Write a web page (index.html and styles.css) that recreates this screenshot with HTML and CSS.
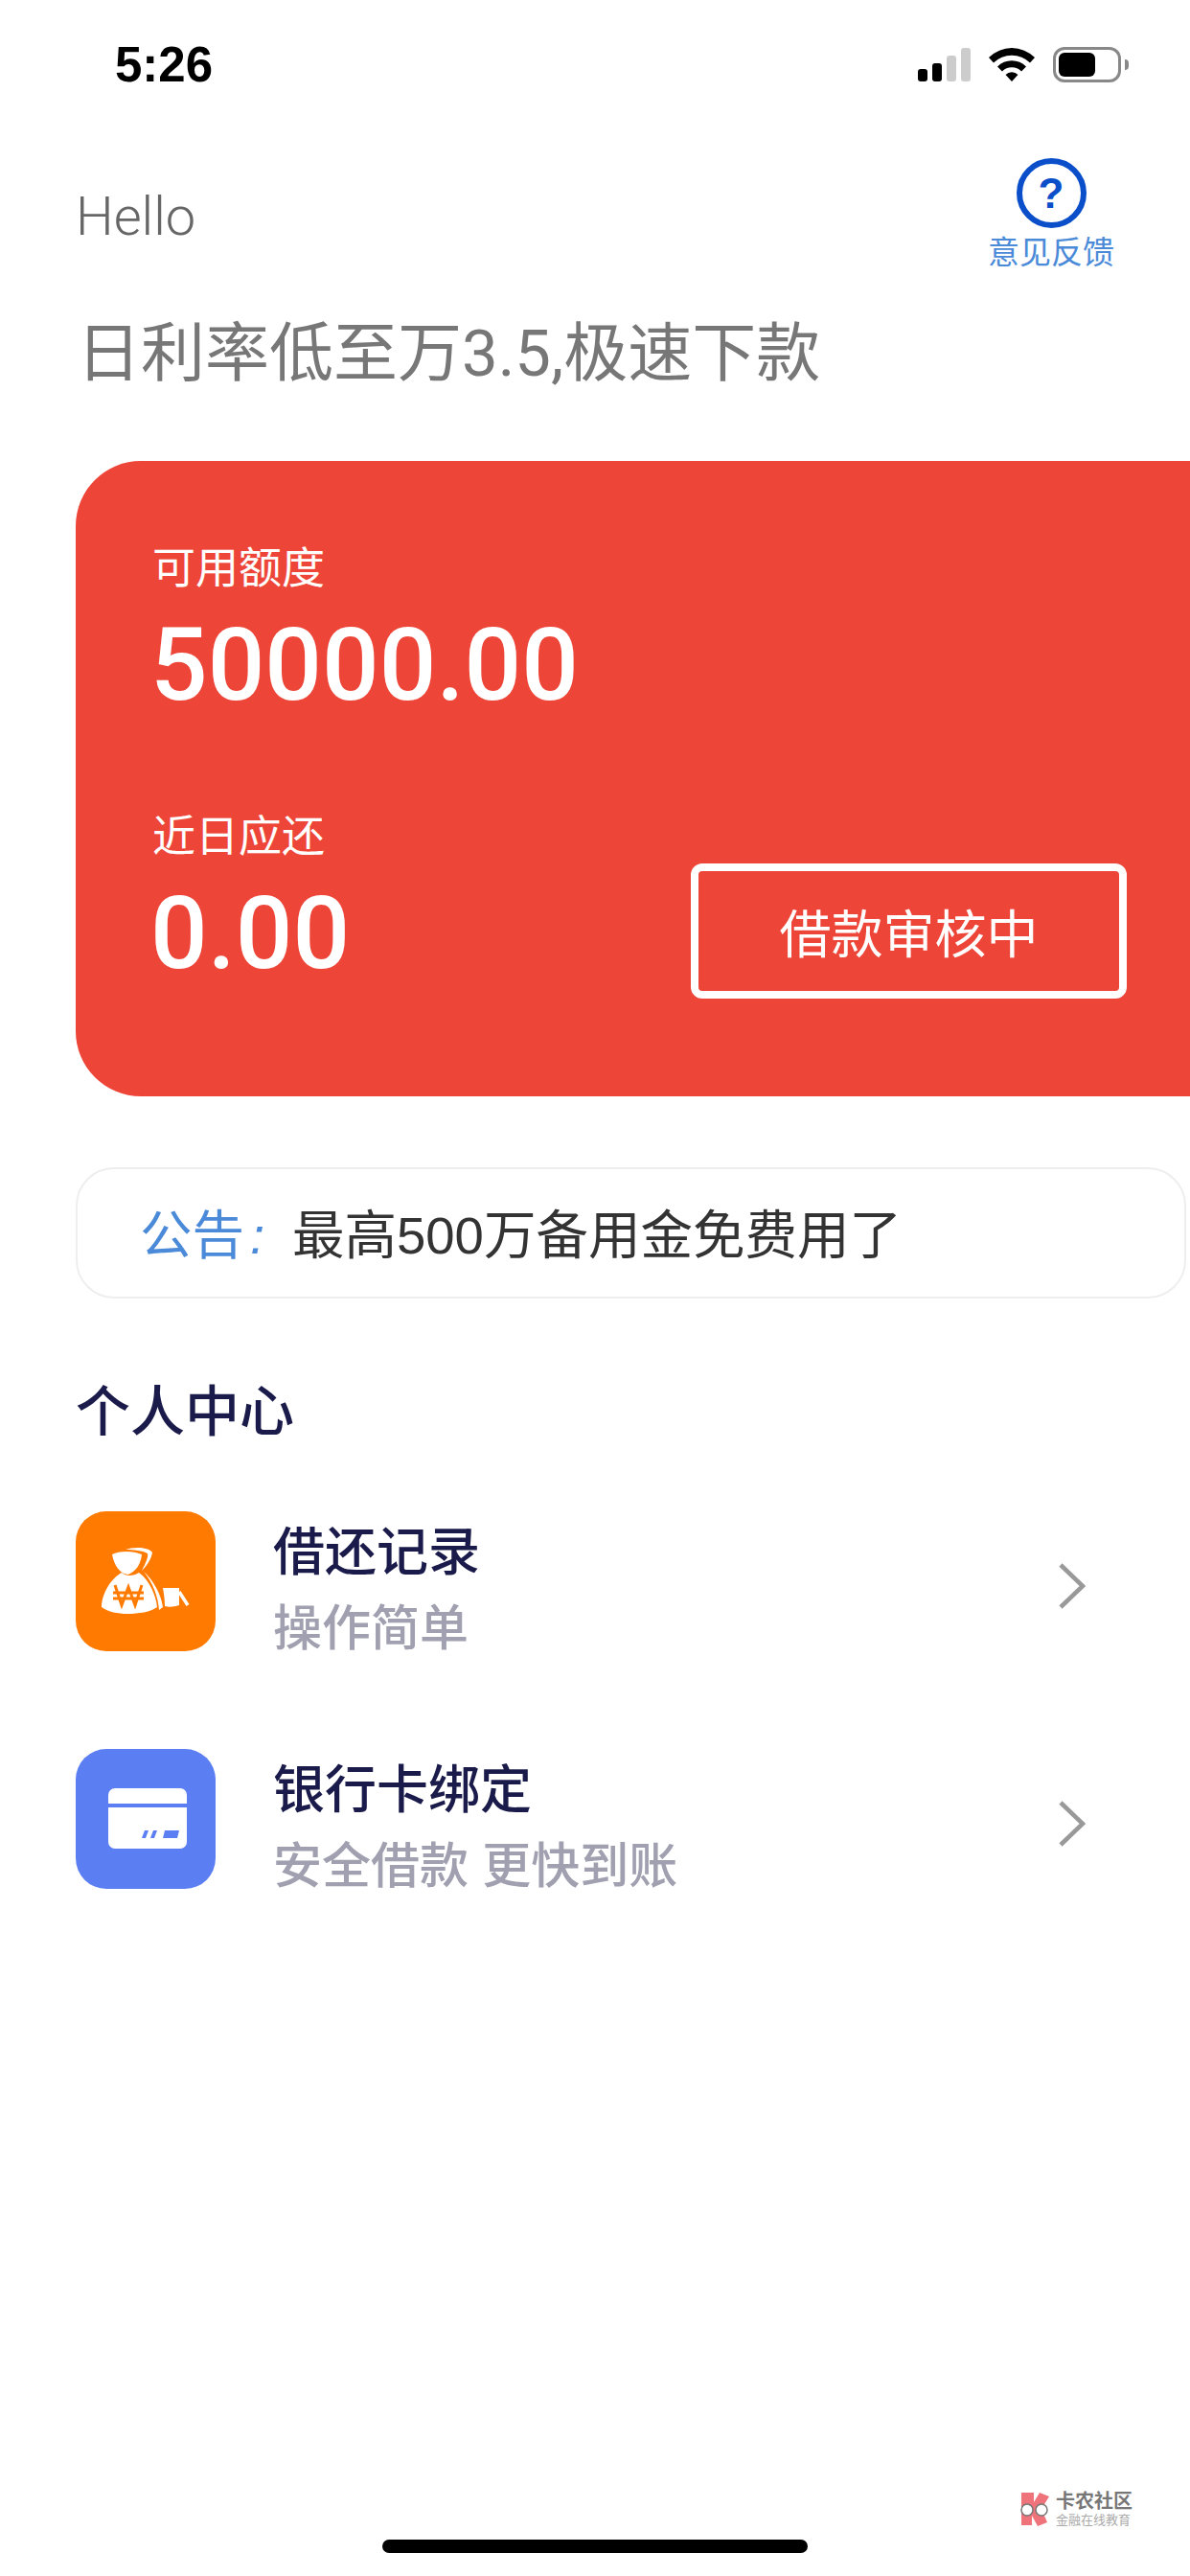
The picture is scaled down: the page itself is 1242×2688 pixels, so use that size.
FILE: index.html
```html
<!DOCTYPE html>
<html>
<head>
    <meta charset="utf-8">
    <link rel="stylesheet" href="styles.css">
</head>
<body>
    <div class="page">
        <div class="status-bar">
            <span class="time">5:26</span>
            <div class="status-icons">
                <svg class="signal" width="55" height="35" viewBox="0 0 55 35">
                    <rect x="0" y="22" width="10" height="13" rx="3" fill="#000"/>
                    <rect x="15" y="16" width="10" height="19" rx="3" fill="#000"/>
                    <rect x="30" y="8" width="10" height="27" rx="3" fill="#ccc"/>
                    <rect x="45" y="0" width="10" height="35" rx="3" fill="#ccc"/>
                </svg>
                <svg class="wifi" width="48" height="36" viewBox="0 0 48 36">
                    <path d="M0 11 A34 34 0 0 1 48 11 L43 16.500 A27 27 0 0 0 5 16.500 Z" fill="#000"/>
                    <path d="M9 20.500 A21 21 0 0 1 39 20.500 L34 25.500 A14 14 0 0 0 14 25.500 Z" fill="#000"/>
                    <path d="M17.500 29 A9 9 0 0 1 30.500 29 L24 36 Z" fill="#000"/>
                </svg>
                <div class="battery">
                    <div class="battery-level"></div>
                </div>
                <div class="battery-nub"></div>
            </div>
        </div>

        <div class="header">
            <span class="hello">Hello</span>
            <div class="feedback">
                <div class="help-icon">?</div>
                <span>意见反馈</span>
            </div>
        </div>

        <h1 class="headline">日利率低至万3.5,极速下款</h1>

        <div class="card">
            <div class="card-label">可用额度</div>
            <div class="card-amount">50000.00</div>
            <div class="card-bottom">
                <div>
                    <div class="card-label">近日应还</div>
                    <div class="card-amount">0.00</div>
                </div>
                <div class="status-btn">借款审核中</div>
            </div>
        </div>

        <div class="notice">
            <span class="notice-tag">公告<i>:</i></span>
            <span class="notice-text">最高500万备用金免费用了</span>
        </div>

        <h2 class="section-title">个人中心</h2>

        <div class="menu-row">
            <div class="menu-icon orange">
                <svg width="146" height="146" viewBox="0 0 146 146">
                    <path d="M38 45 C45 41 60 41 69 45 C68 54 64 62 55 66 C47 66 40 57 38 45 Z" fill="#fff"/>
                    <path d="M52 40 C60 37 76 37 80 43 C79 50 74 57 69 62 C73 54 76 48 75 44 C70 41 60 40 52 40 Z" fill="#fff"/>
                    <path d="M48 64 C52 68 60 68 66 64 C77 72 84 88 85 100 C78 105 66 107 54 107 C44 107 34 105 27 100 C27 86 37 70 48 64 Z" fill="#fff"/>
                    <path d="M71 63 C81 72 89 86 91 100 L87 103 C86 88 80 74 71 63 Z" fill="#fff"/>
                    <path d="M41 77 L48 98 L55 79 L62 98 L69 77 M39 85 H71 M39 91 H71" fill="none" stroke="#ff7a00" stroke-width="3"/>
                    <path d="M91 80 H108 V98 C102 100 97 100 93 99 C93 92 92 86 91 80 Z" fill="#fff"/>
                    <path d="M108 84 L117 98" fill="none" stroke="#fff" stroke-width="3.500"/>
                </svg>
            </div>
            <div class="menu-text">
                <div class="menu-title">借还记录</div>
                <div class="menu-sub">操作简单</div>
            </div>
            <svg class="chevron" width="30" height="50" viewBox="0 0 30 50">
                <path d="M3 3 L26 25 L3 47" fill="none" stroke="#999" stroke-width="4.500"/>
            </svg>
        </div>

        <div class="menu-row">
            <div class="menu-icon blue">
                <svg width="146" height="146" viewBox="0 0 146 146">
                    <path d="M34 57 V48 A7 7 0 0 1 41 41 H109 A7 7 0 0 1 116 48 V57 Z" fill="#fff"/>
                    <path d="M34 61 H116 V97 A7 7 0 0 1 109 104 H41 A7 7 0 0 1 34 97 Z" fill="#fff"/>
                    <path d="M72 85 H76 L73 93 H69 Z M81 85 H85 L82 93 H78 Z M93 85 H108 L106 93 H91 Z" fill="#5b7ef2"/>
                </svg>
            </div>
            <div class="menu-text">
                <div class="menu-title">银行卡绑定</div>
                <div class="menu-sub">安全借款 更快到账</div>
            </div>
            <svg class="chevron" width="30" height="50" viewBox="0 0 30 50">
                <path d="M3 3 L26 25 L3 47" fill="none" stroke="#999" stroke-width="4.500"/>
            </svg>
        </div>

        <div class="home-bar"></div>

        <div class="watermark">
            <svg width="36" height="36" viewBox="0 0 36 36">
                <path d="M4 1 H17 V11 L23 1 L33 5 L25 18 L31 32 L21 36 L15 25 V35 H4 Z" fill="#ee737b"/>
                <circle cx="10" cy="19" r="6" fill="#fff" stroke="#777" stroke-width="1.500"/>
                <circle cx="25" cy="19" r="6" fill="#fff" stroke="#777" stroke-width="1.500"/>
            </svg>
            <div class="watermark-text">
                <div class="wm-name">卡农社区</div>
                <div class="wm-sub">金融在线教育</div>
            </div>
        </div>
    </div>
</body>
</html>
```

FILE: styles.css
```css
* {
    box-sizing: border-box;
}

body {
    margin: 0;
    background: #fff;
    font-family: "Liberation Sans", "Noto Sans CJK SC", sans-serif;
}

.page {
    position: relative;
    width: 1242px;
    height: 2688px;
    overflow: hidden;
    display: flex;
    flex-direction: column;
    background: #fff;
}

.status-bar {
    height: 134px;
    padding: 0 64px 0 120px;
    display: flex;
    justify-content: space-between;
    align-items: center;
}

.time {
    font-size: 51px;
    font-weight: bold;
    color: #000;
}

.status-icons {
    display: flex;
    align-items: center;
}

.wifi {
    margin-left: 19px;
}

.battery {
    width: 71px;
    height: 37px;
    margin-left: 19px;
    padding: 3px;
    border: 3px solid #888;
    border-radius: 12px;
}

.battery-level {
    width: 38px;
    height: 25px;
    background: #000;
    border-radius: 6px;
}

.battery-nub {
    width: 4px;
    height: 11px;
    margin-left: 4px;
    background: #888;
    border-radius: 0 4px 4px 0;
}

.header {
    height: 124px;
    margin-top: 31px;
    padding: 0 79px;
    display: flex;
    justify-content: space-between;
}

.hello {
    margin-top: 26px;
    font-family: Roboto, "Liberation Sans", sans-serif;
    font-size: 56px;
    font-weight: 300;
    line-height: 70px;
    color: #666;
}

.feedback {
    display: flex;
    flex-direction: column;
    align-items: center;
    font-size: 33px;
    line-height: 44px;
    color: #4a8ad8;
}

.help-icon {
    width: 73px;
    height: 73px;
    margin-bottom: 4px;
    border: 6px solid #0a4fc9;
    border-radius: 50%;
    display: flex;
    justify-content: center;
    align-items: center;
    font-size: 44px;
    font-weight: bold;
    line-height: 1;
    color: #0a4fc9;
}

.headline {
    margin: 35px 0 0 80px;
    font-family: Roboto, "Noto Sans CJK SC", sans-serif;
    font-size: 67px;
    font-weight: 400;
    line-height: 90px;
    color: #777;
}

.card {
    height: 663px;
    margin: 67px 0 0 79px;
    padding: 80px 0 0 80px;
    background: #ee4539;
    border-radius: 68px 0 0 68px;
    color: #fff;
}

.card-label {
    font-size: 45px;
    line-height: 66px;
}

.card-amount {
    margin: 8px 0 0 -2px;
    font-family: Roboto, "Liberation Sans", sans-serif;
    font-size: 105px;
    font-weight: 500;
    line-height: 120px;
}

.card-bottom {
    margin-top: 86px;
    padding-right: 66px;
    display: flex;
    justify-content: space-between;
    align-items: flex-end;
}

.status-btn {
    width: 455px;
    height: 141px;
    margin-bottom: -7px;
    border: 8px solid #fff;
    border-radius: 12px;
    display: flex;
    justify-content: center;
    align-items: center;
    font-size: 54px;
}

.notice {
    height: 137px;
    margin: 74px 4px 0 79px;
    padding: 0 0 4px 65px;
    border: 2px solid #eeeeee;
    border-radius: 40px;
    display: flex;
    align-items: center;
    font-size: 54.5px;
}

.notice-tag {
    width: 159px;
    color: #4a8ad8;
}

.notice-tag i {
    margin-left: 6px;
}

.notice-text {
    color: #333;
}

.section-title {
    margin: 77px 0 0 79px;
    font-size: 57px;
    font-weight: 500;
    line-height: 82px;
    color: #1b1b4b;
}

.menu-row {
    height: 146px;
    margin-top: 63px;
    padding: 0 108px 0 79px;
    display: flex;
    align-items: center;
}

.menu-row + .menu-row {
    margin-top: 102px;
}

.menu-icon {
    width: 146px;
    height: 146px;
    border-radius: 32px;
}

.orange {
    background: #ff7a00;
}

.blue {
    background: #5b7ef2;
}

.menu-text {
    flex: 1;
    margin-left: 60px;
    padding-top: 20px;
}

.menu-title {
    font-size: 54px;
    font-weight: 500;
    line-height: 79px;
    color: #1b1b4b;
}

.menu-sub {
    font-size: 51px;
    font-weight: 500;
    line-height: 79px;
    color: #a0a0b0;
}

.chevron {
    margin-top: 10px;
}

.home-bar {
    width: 444px;
    height: 14px;
    margin: auto auto 24px;
    background: #000;
    border-radius: 7px;
}

.watermark {
    position: absolute;
    left: 1062px;
    top: 2598px;
    display: flex;
    align-items: center;
    gap: 4px;
}

.wm-name {
    font-size: 20px;
    font-weight: bold;
    line-height: 24px;
    color: #777;
}

.wm-sub {
    font-size: 13px;
    line-height: 15px;
    color: #aaa;
}
```
